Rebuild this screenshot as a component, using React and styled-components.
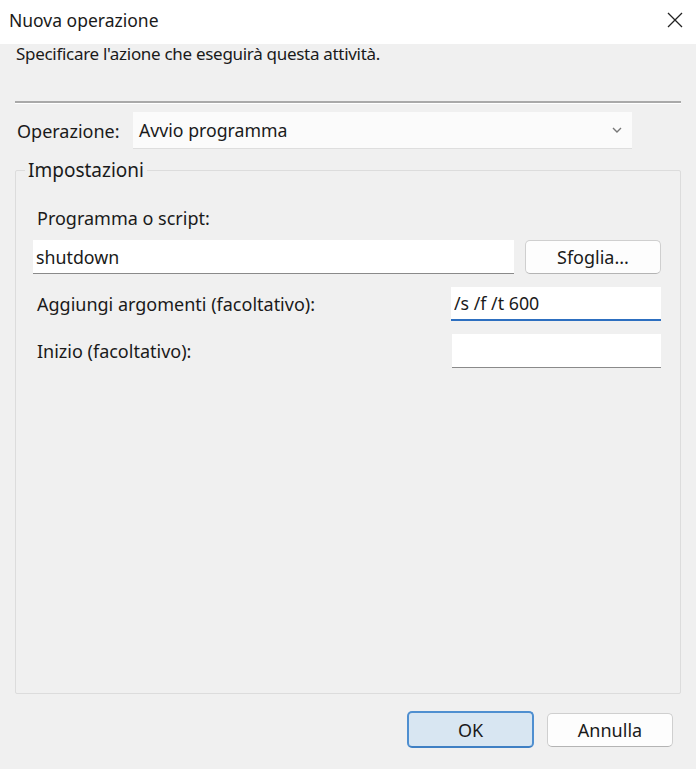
import React from 'react';
import styled, { createGlobalStyle } from 'styled-components';

const GlobalStyle = createGlobalStyle`
  html, body {
    margin: 0;
    padding: 0;
    background: #f0f0f0;
  }
  body {
    font-family: "Noto Sans", "Open Sans", sans-serif;
    color: #1a1a1a;
  }
`;

const App = () => {
  return (
    <>
      <GlobalStyle />
      <Window>
        <TitleBar>
          <Title>Nuova operazione</Title>
          <CloseButton aria-label="Chiudi">
            <svg width="16" height="16" viewBox="0 0 16 16">
              <path d="M1 1 L15 15 M15 1 L1 15" stroke="#222" strokeWidth="1.3" fill="none" />
            </svg>
          </CloseButton>
        </TitleBar>

        <Body>
          <Intro>Specificare l'azione che eseguirà questa attività.</Intro>
          <Separator />

          <OpRow>
            <Label>Operazione:</Label>
            <Select>
              <span>Avvio programma</span>
              <svg width="12" height="8" viewBox="0 0 12 8">
                <path d="M2 2 L6 6 L10 2" stroke="#777" strokeWidth="1.4" fill="none" />
              </svg>
            </Select>
          </OpRow>

          <Group>
            <Legend>Impostazioni</Legend>
            <FieldLabel>Programma o script:</FieldLabel>
            <ProgramRow>
              <Input value="shutdown" readOnly $grow />
              <Button>Sfoglia...</Button>
            </ProgramRow>
            <ArgRow>
              <Label>Aggiungi argomenti (facoltativo):</Label>
              <Input value="/s /f /t 600" readOnly $focused $width="210px" />
            </ArgRow>
            <ArgRow>
              <Label>Inizio (facoltativo):</Label>
              <Input value="" readOnly $width="209px" />
            </ArgRow>
          </Group>

          <Footer>
            <Button $primary $width="127px">OK</Button>
            <Button $width="126px">Annulla</Button>
          </Footer>
        </Body>
      </Window>
    </>
  );
};

export default App;

const Window = styled.div`
  width: 696px;
  height: 769px;
  display: flex;
  flex-direction: column;
  background: #f0f0f0;
  overflow: hidden;
`;

const TitleBar = styled.div`
  height: 44px;
  background: #ffffff;
  display: flex;
  align-items: center;
  justify-content: space-between;
  padding: 0 13px 4px 9px;
  box-sizing: border-box;
  flex-shrink: 0;
`;

const Title = styled.div`
  font-size: 17.5px;
  color: #1a1a1a;
`;

const CloseButton = styled.div`
  width: 16px;
  height: 16px;
  display: flex;
  align-items: center;
  justify-content: center;
`;

const Body = styled.div`
  flex: 1;
  display: flex;
  flex-direction: column;
  padding: 0 15px 0 15px;
`;

const Intro = styled.div`
  font-size: 17px;
  padding-left: 1px;
  height: 30px;
  line-height: 30px;
  margin-top: -5px;
  letter-spacing: -0.3px;
`;

const Separator = styled.div`
  height: 0;
  border-top: 2px solid #a9a9a9;
  border-bottom: 1px solid #ffffff;
  margin-top: 32px;
`;

const OpRow = styled.div`
  display: flex;
  align-items: center;
  margin-top: 8px;
  padding-left: 2px;
`;

const Label = styled.div`
  font-size: 18px;
  color: #1a1a1a;
  flex: 1;
`;

const Select = styled.div`
  width: 499px;
  height: 37px;
  box-sizing: border-box;
  margin-right: 49px;
  background: #fbfbfb;
  border-bottom: 1px solid #dedede;
  display: flex;
  align-items: center;
  justify-content: space-between;
  padding: 0 9px 0 6px;
  font-size: 17.7px;
  flex: none;
`;

const Group = styled.fieldset`
  flex: 1;
  margin: 8px 0 0 0;
  border: 1px solid #dcdcdc;
  border-radius: 2px;
  padding: 0 19px 0 17px;
  display: flex;
  flex-direction: column;
  max-height: 537px;
  box-sizing: border-box;
`;

const Legend = styled.legend`
  font-size: 19px;
  padding: 0 3px;
  margin-left: -8px;
`;

const FieldLabel = styled.div`
  font-size: 18px;
  margin-top: 23px;
  padding-left: 4px;
`;

const ProgramRow = styled.div`
  display: flex;
  align-items: center;
  gap: 11px;
  margin-top: 10px;
`;

const ArgRow = styled.div`
  display: flex;
  align-items: center;
  margin-top: 13px;
  padding-left: 4px;
`;

const Input = styled.input`
  box-sizing: border-box;
  height: 34px;
  ${props => props.$grow ? 'flex: 1;' : `width: ${props.$width}; flex: none;`}
  border: none;
  border-bottom: ${props => props.$focused ? '2px solid #2d6fc0' : '1px solid #8a8a8a'};
  background: #ffffff;
  font-family: "Noto Sans", "Open Sans", sans-serif;
  font-size: 17.8px;
  color: #1a1a1a;
  padding: 0 3px;
  outline: none;
`;

const Button = styled.button`
  box-sizing: border-box;
  width: ${props => props.$width || '136px'};
  height: ${props => props.$primary ? '37px' : '34px'};
  border-radius: 5px;
  border: ${props => props.$primary ? '2px solid #4f8fd0' : '1px solid #cfcfcf'};
  border-bottom-color: ${props => props.$primary ? '#3f80c4' : '#b4b4b4'};
  background: ${props => props.$primary ? '#d8e6f2' : '#fdfdfd'};
  font-family: "Noto Sans", "Open Sans", sans-serif;
  font-size: 18px;
  color: #1a1a1a;
  flex: none;
  padding: 0;
`;

const Footer = styled.div`
  display: flex;
  justify-content: flex-end;
  align-items: center;
  gap: 13px;
  padding-right: 8px;
  margin-top: 17px;
  margin-bottom: 21px;
`;
